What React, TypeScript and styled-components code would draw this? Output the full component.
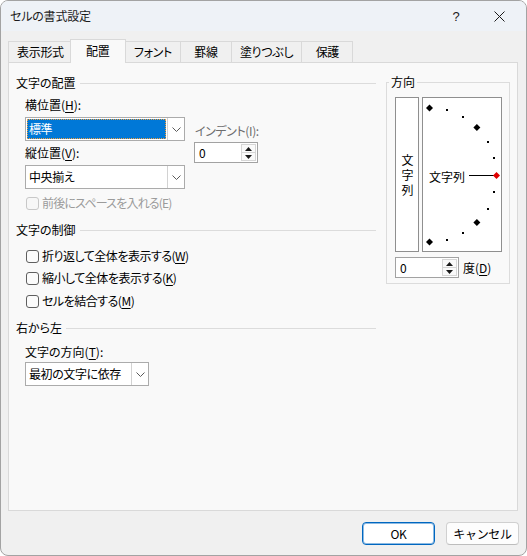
import React from "react";
import styled, { createGlobalStyle, css } from "styled-components";

const GlobalStyle = createGlobalStyle`
  html, body { margin: 0; padding: 0; background: #ffffff; }
  body {
    font-family: "Noto Sans CJK JP", "Noto Sans", sans-serif;
    font-size: 12px;
    color: #000000;
    font-feature-settings: "palt";
  }
  * { box-sizing: border-box; }
  u { text-underline-offset: 2px; }
`;

const Window = styled.div`
  width: 527px;
  height: 556px;
  border: 1px solid #a3a3a3;
  border-radius: 8px;
  overflow: hidden;
  background: #f0f0f0;
  display: flex;
  flex-direction: column;
`;

const TitleBar = styled.div`
  flex: none;
  height: 30px;
  background: #eef2f7;
  display: flex;
  align-items: center;
  padding: 0 6px 0 9px;
`;

const TitleText = styled.div`
  color: #1b1b1b;
  line-height: 16px;
  letter-spacing: -0.2px;
`;

const TitleButton = styled.div<{ $width: number; $first?: boolean }>`
  width: ${(p) => p.$width}px;
  height: 30px;
  display: flex;
  align-items: center;
  justify-content: center;
  color: #1b1b1b;
  font-size: 13px;
  font-family: "Liberation Sans", "Noto Sans", sans-serif;
  ${(p) => p.$first && css`margin-left: auto;`}
`;

const Body = styled.div`
  flex: 1;
  display: flex;
  flex-direction: column;
  padding: 8px 8px 0 7px;
`;

const TabStrip = styled.div`
  display: flex;
  align-items: flex-end;
  height: 24px;
  margin-bottom: -1px;
  position: relative;
  z-index: 1;
`;

const Tab = styled.div<{ $active?: boolean }>`
  min-width: 52px;
  height: 21px;
  margin-bottom: 1px;
  margin-right: -1px;
  padding: 0 8px;
  display: flex;
  align-items: center;
  justify-content: center;
  border: 1px solid #d9d9d9;
  border-bottom: none;
  background: #f0f0f0;
  line-height: 16px;
  letter-spacing: -0.3px;
  white-space: nowrap;
  ${(p) =>
    p.$active &&
    css`
      position: relative;
      z-index: 2;
      min-width: 56px;
      height: 24px;
      margin-bottom: 0;
      margin-left: -2px;
      padding: 0 10px 2px;
      background: #f9f9f9;
    `}
`;

const Panel = styled.div`
  height: 449px;
  border: 1px solid #d9d9d9;
  background: #f9f9f9;
  display: flex;
  align-items: flex-start;
  gap: 10px;
  padding: 11px 7px 0 7px;
`;

const LeftColumn = styled.div`
  width: 360px;
  padding-top: 1px;
  display: flex;
  flex-direction: column;
`;

const GroupHeader = styled.div<{ $top?: number }>`
  display: flex;
  align-items: center;
  gap: 4px;
  height: 16px;
  line-height: 16px;
  margin-top: ${(p) => p.$top ?? 0}px;
  white-space: nowrap;
  &::after {
    content: "";
    flex: 1;
    height: 1px;
    background: #dcdcdc;
  }
`;

const Indent = styled.div<{ $top?: number }>`
  margin-left: 9px;
  margin-top: ${(p) => p.$top ?? 0}px;
  display: flex;
  flex-direction: column;
  align-items: flex-start;
`;

const AlignRow = styled.div`
  display: flex;
  gap: 9px;
  align-items: flex-start;
`;

const FieldStack = styled.div<{ $top?: number }>`
  display: flex;
  flex-direction: column;
  align-items: flex-start;
  margin-top: ${(p) => p.$top ?? 0}px;
`;

const FieldLabel = styled.div<{ $top?: number; $disabled?: boolean }>`
  line-height: 16px;
  height: 16px;
  margin-top: ${(p) => p.$top ?? 0}px;
  white-space: nowrap;
  color: ${(p) => (p.$disabled ? "#6d6d6d" : "#000000")};
  ${(p) => p.$disabled && css`padding-left: 1px; letter-spacing: -0.4px;`}
`;

const Combo = styled.div<{ $width: number; $top?: number }>`
  display: flex;
  width: ${(p) => p.$width}px;
  height: 24px;
  margin-top: ${(p) => p.$top ?? 0}px;
  border: 1px solid #ababab;
  background: #ffffff;
`;

const ComboValue = styled.div<{ $selected?: boolean }>`
  flex: 1;
  display: flex;
  align-items: center;
  margin: 1px;
  padding-left: 2px;
  line-height: 16px;
  letter-spacing: -0.4px;
  white-space: nowrap;
  ${(p) =>
    p.$selected &&
    css`
      background: #0078d7;
      color: #ffffff;
      outline: 1px dotted #f0a040;
      outline-offset: -1px;
    `}
`;

const DropButton = styled.div`
  width: 17px;
  border-left: 1px solid #d2d2d2;
  display: flex;
  align-items: center;
  justify-content: center;
`;

const Spinner = styled.div<{ $width: number; $top?: number }>`
  display: flex;
  width: ${(p) => p.$width}px;
  height: 21px;
  margin-top: ${(p) => p.$top ?? 0}px;
  border: 1px solid #a2a2a2;
  background: #ffffff;
`;

const SpinValue = styled.div`
  flex: 1;
  display: flex;
  align-items: center;
  padding-left: 4px;
  line-height: 16px;
`;

const SpinColumn = styled.div`
  width: 15px;
  margin: 1px;
  display: flex;
  flex-direction: column;
  border: 1px solid #d6d6d6;
`;

const SpinHalf = styled.div<{ $lower?: boolean }>`
  flex: 1;
  display: flex;
  align-items: center;
  justify-content: center;
  background: #fafafa;
  ${(p) => p.$lower && css`border-top: 1px solid #d6d6d6;`}
`;

const CheckRow = styled.div<{ $top?: number; $disabled?: boolean }>`
  display: flex;
  align-items: center;
  gap: 3px;
  height: 16px;
  margin-left: 1px;
  margin-top: ${(p) => p.$top ?? 0}px;
  line-height: 16px;
  letter-spacing: ${(p) => (p.$disabled ? "-0.8px" : "-0.5px")};
  white-space: nowrap;
  color: ${(p) => (p.$disabled ? "#9b9b9b" : "#000000")};
`;

const CheckBox = styled.span<{ $disabled?: boolean }>`
  flex: none;
  width: 13px;
  height: 13px;
  border: 1px solid ${(p) => (p.$disabled ? "#c8c8c8" : "#5f5f5f")};
  border-radius: 3px;
  background: ${(p) => (p.$disabled ? "#f7f7f7" : "#fbfbfb")};
`;

const DirectionGroup = styled.fieldset`
  width: 124px;
  margin: 0;
  min-width: 0;
  border: 1px solid #dcdcdc;
  padding: 7px 7px 5px 8px;
`;

const GroupLegend = styled.legend`
  padding: 0 2px;
  margin-left: -6px;
  line-height: 16px;
  font-size: 12px;
`;

const DirectionRow = styled.div`
  display: flex;
  gap: 3px;
`;

const VerticalBox = styled.div`
  width: 24px;
  height: 155px;
  border: 1px solid #8f8f8f;
  background: #ffffff;
  display: flex;
  align-items: center;
  justify-content: center;
`;

const VerticalText = styled.span`
  writing-mode: vertical-rl;
  letter-spacing: 3px;
  line-height: 12px;
  padding-top: 3px;
`;

const DialBox = styled.div`
  position: relative;
  width: 80px;
  height: 155px;
  border: 1px solid #8f8f8f;
  background: #ffffff;
`;

const DialSvg = styled.svg`
  position: absolute;
  left: 0;
  top: 0;
  display: block;
`;

const DialLabel = styled.span`
  position: absolute;
  left: 6px;
  top: 71px;
  line-height: 16px;
  white-space: nowrap;
  background: #ffffff;
`;

const DegreeRow = styled.div`
  display: flex;
  align-items: center;
  gap: 4px;
  margin-top: 5px;
  line-height: 16px;
`;

const Footer = styled.div`
  display: flex;
  justify-content: flex-end;
  gap: 11px;
  padding-top: 11px;
  margin-right: -1px;
`;

const DialogButton = styled.button<{ $primary?: boolean }>`
  width: 73px;
  height: 23px;
  padding: 0;
  border-radius: 4px;
  font-family: inherit;
  font-size: 12px;
  color: #000000;
  line-height: 16px;
  letter-spacing: -0.3px;
  background: #fdfdfd;
  border: 1px solid #d0d0d0;
  border-bottom-color: #bdbdbd;
  ${(p) =>
    p.$primary &&
    css`
      background: #ffffff;
      border: 1px solid #0067c0;
      box-shadow: inset 0 0 0 1px rgba(0, 103, 192, 0.45);
    `}
`;

const Chevron = () => (
  <svg width="9" height="5" viewBox="0 0 9 5">
    <polyline points="0.5,0.5 4.5,4.5 8.5,0.5" fill="none" stroke="#5a5a5a" strokeWidth="1" />
  </svg>
);

const SpinArrow = ({ down }: { down?: boolean }) => (
  <svg width="7" height="4" viewBox="0 0 7 4">
    <polygon points={down ? "0,0 7,0 3.5,4" : "3.5,0 7,4 0,4"} fill="#1a1a1a" />
  </svg>
);

const SpinBox = ({ width, top, value }: { width: number; top?: number; value: string }) => (
  <Spinner $width={width} $top={top}>
    <SpinValue>{value}</SpinValue>
    <SpinColumn>
      <SpinHalf>
        <SpinArrow />
      </SpinHalf>
      <SpinHalf $lower>
        <SpinArrow down />
      </SpinHalf>
    </SpinColumn>
  </Spinner>
);

const ComboBox = ({
  width,
  top,
  value,
  selected,
}: {
  width: number;
  top?: number;
  value: string;
  selected?: boolean;
}) => (
  <Combo $width={width} $top={top}>
    <ComboValue $selected={selected}>{value}</ComboValue>
    <DropButton>
      <Chevron />
    </DropButton>
  </Combo>
);

const DIAL_W = 78;
const DIAL_H = 153;
const CX = 6.5;
const CY = 77;
const R = 67;

const diamond = (x: number, y: number, h: number) =>
  `${x},${y - h} ${x + h},${y} ${x},${y + h} ${x - h},${y}`;

const Dial = () => {
  const angles = Array.from({ length: 13 }, (_, i) => -90 + i * 15);
  return (
    <DialSvg width={DIAL_W} height={DIAL_H} viewBox={`0 0 ${DIAL_W} ${DIAL_H}`}>
      <line x1="46" y1={CY + 0.5} x2="71" y2={CY + 0.5} stroke="#000" strokeWidth="1" shapeRendering="crispEdges" />
      {angles.map((a) => {
        const rad = (a * Math.PI) / 180;
        const x = CX + R * Math.cos(rad);
        const y = CY - R * Math.sin(rad);
        if (a === 0) {
          return <polygon key={a} points={diamond(x, y + 0.5, 3.5)} fill="#e00000" />;
        }
        if (Math.abs(a) === 45 || Math.abs(a) === 90) {
          return <polygon key={a} points={diamond(x, y, 3.5)} fill="#000" />;
        }
        return (
          <rect
            key={a}
            x={Math.round(x - 1)}
            y={Math.round(y - 1)}
            width="2"
            height="2"
            fill="#000"
            shapeRendering="crispEdges"
          />
        );
      })}
    </DialSvg>
  );
};

const tabs = ["表示形式", "配置", "フォント", "罫線", "塗りつぶし", "保護"];

export default function App() {
  return (
    <>
      <GlobalStyle />
      <Window>
        <TitleBar>
          <TitleText>セルの書式設定</TitleText>
          <TitleButton $width={44} $first>
            ?
          </TitleButton>
          <TitleButton $width={42}>
            <svg width="11" height="11" viewBox="0 0 11 11">
              <path d="M0.5 0.5 L10.5 10.5 M10.5 0.5 L0.5 10.5" stroke="#1b1b1b" strokeWidth="1" fill="none" />
            </svg>
          </TitleButton>
        </TitleBar>
        <Body>
          <TabStrip>
            {tabs.map((t) => (
              <Tab key={t} $active={t === "配置"}>
                {t}
              </Tab>
            ))}
          </TabStrip>
          <Panel>
            <LeftColumn>
              <GroupHeader>文字の配置</GroupHeader>
              <Indent $top={6}>
                <AlignRow>
                  <FieldStack>
                    <FieldLabel>
                      横位置(<u>H</u>):
                    </FieldLabel>
                    <ComboBox width={160} top={4} value="標準" selected />
                    <FieldLabel $top={4}>
                      縦位置(<u>V</u>):
                    </FieldLabel>
                    <ComboBox width={160} top={4} value="中央揃え" />
                  </FieldStack>
                  <FieldStack $top={26}>
                    <FieldLabel $disabled>インデント(I):</FieldLabel>
                    <SpinBox width={64} top={3} value="0" />
                  </FieldStack>
                </AlignRow>
                <CheckRow $top={6} $disabled>
                  <CheckBox $disabled />
                  前後にスペースを入れる(E)
                </CheckRow>
              </Indent>
              <GroupHeader $top={11}>文字の制御</GroupHeader>
              <Indent $top={10}>
                <CheckRow>
                  <CheckBox />
                  <span>
                    折り返して全体を表示する(<u>W</u>)
                  </span>
                </CheckRow>
                <CheckRow $top={6}>
                  <CheckBox />
                  <span>
                    縮小して全体を表示する(<u>K</u>)
                  </span>
                </CheckRow>
                <CheckRow $top={7}>
                  <CheckBox />
                  <span>
                    セルを結合する(<u>M</u>)
                  </span>
                </CheckRow>
              </Indent>
              <GroupHeader $top={11}>右から左</GroupHeader>
              <Indent $top={8}>
                <FieldLabel>
                  文字の方向(<u>T</u>):
                </FieldLabel>
                <ComboBox width={124} top={2} value="最初の文字に依存" />
              </Indent>
            </LeftColumn>
            <DirectionGroup>
              <GroupLegend>方向</GroupLegend>
              <DirectionRow>
                <VerticalBox>
                  <VerticalText>文字列</VerticalText>
                </VerticalBox>
                <DialBox>
                  <Dial />
                  <DialLabel>文字列</DialLabel>
                </DialBox>
              </DirectionRow>
              <DegreeRow>
                <SpinBox width={64} value="0" />
                <span>
                  度(<u>D</u>)
                </span>
              </DegreeRow>
            </DirectionGroup>
          </Panel>
          <Footer>
            <DialogButton $primary>OK</DialogButton>
            <DialogButton>キャンセル</DialogButton>
          </Footer>
        </Body>
      </Window>
    </>
  );
}
